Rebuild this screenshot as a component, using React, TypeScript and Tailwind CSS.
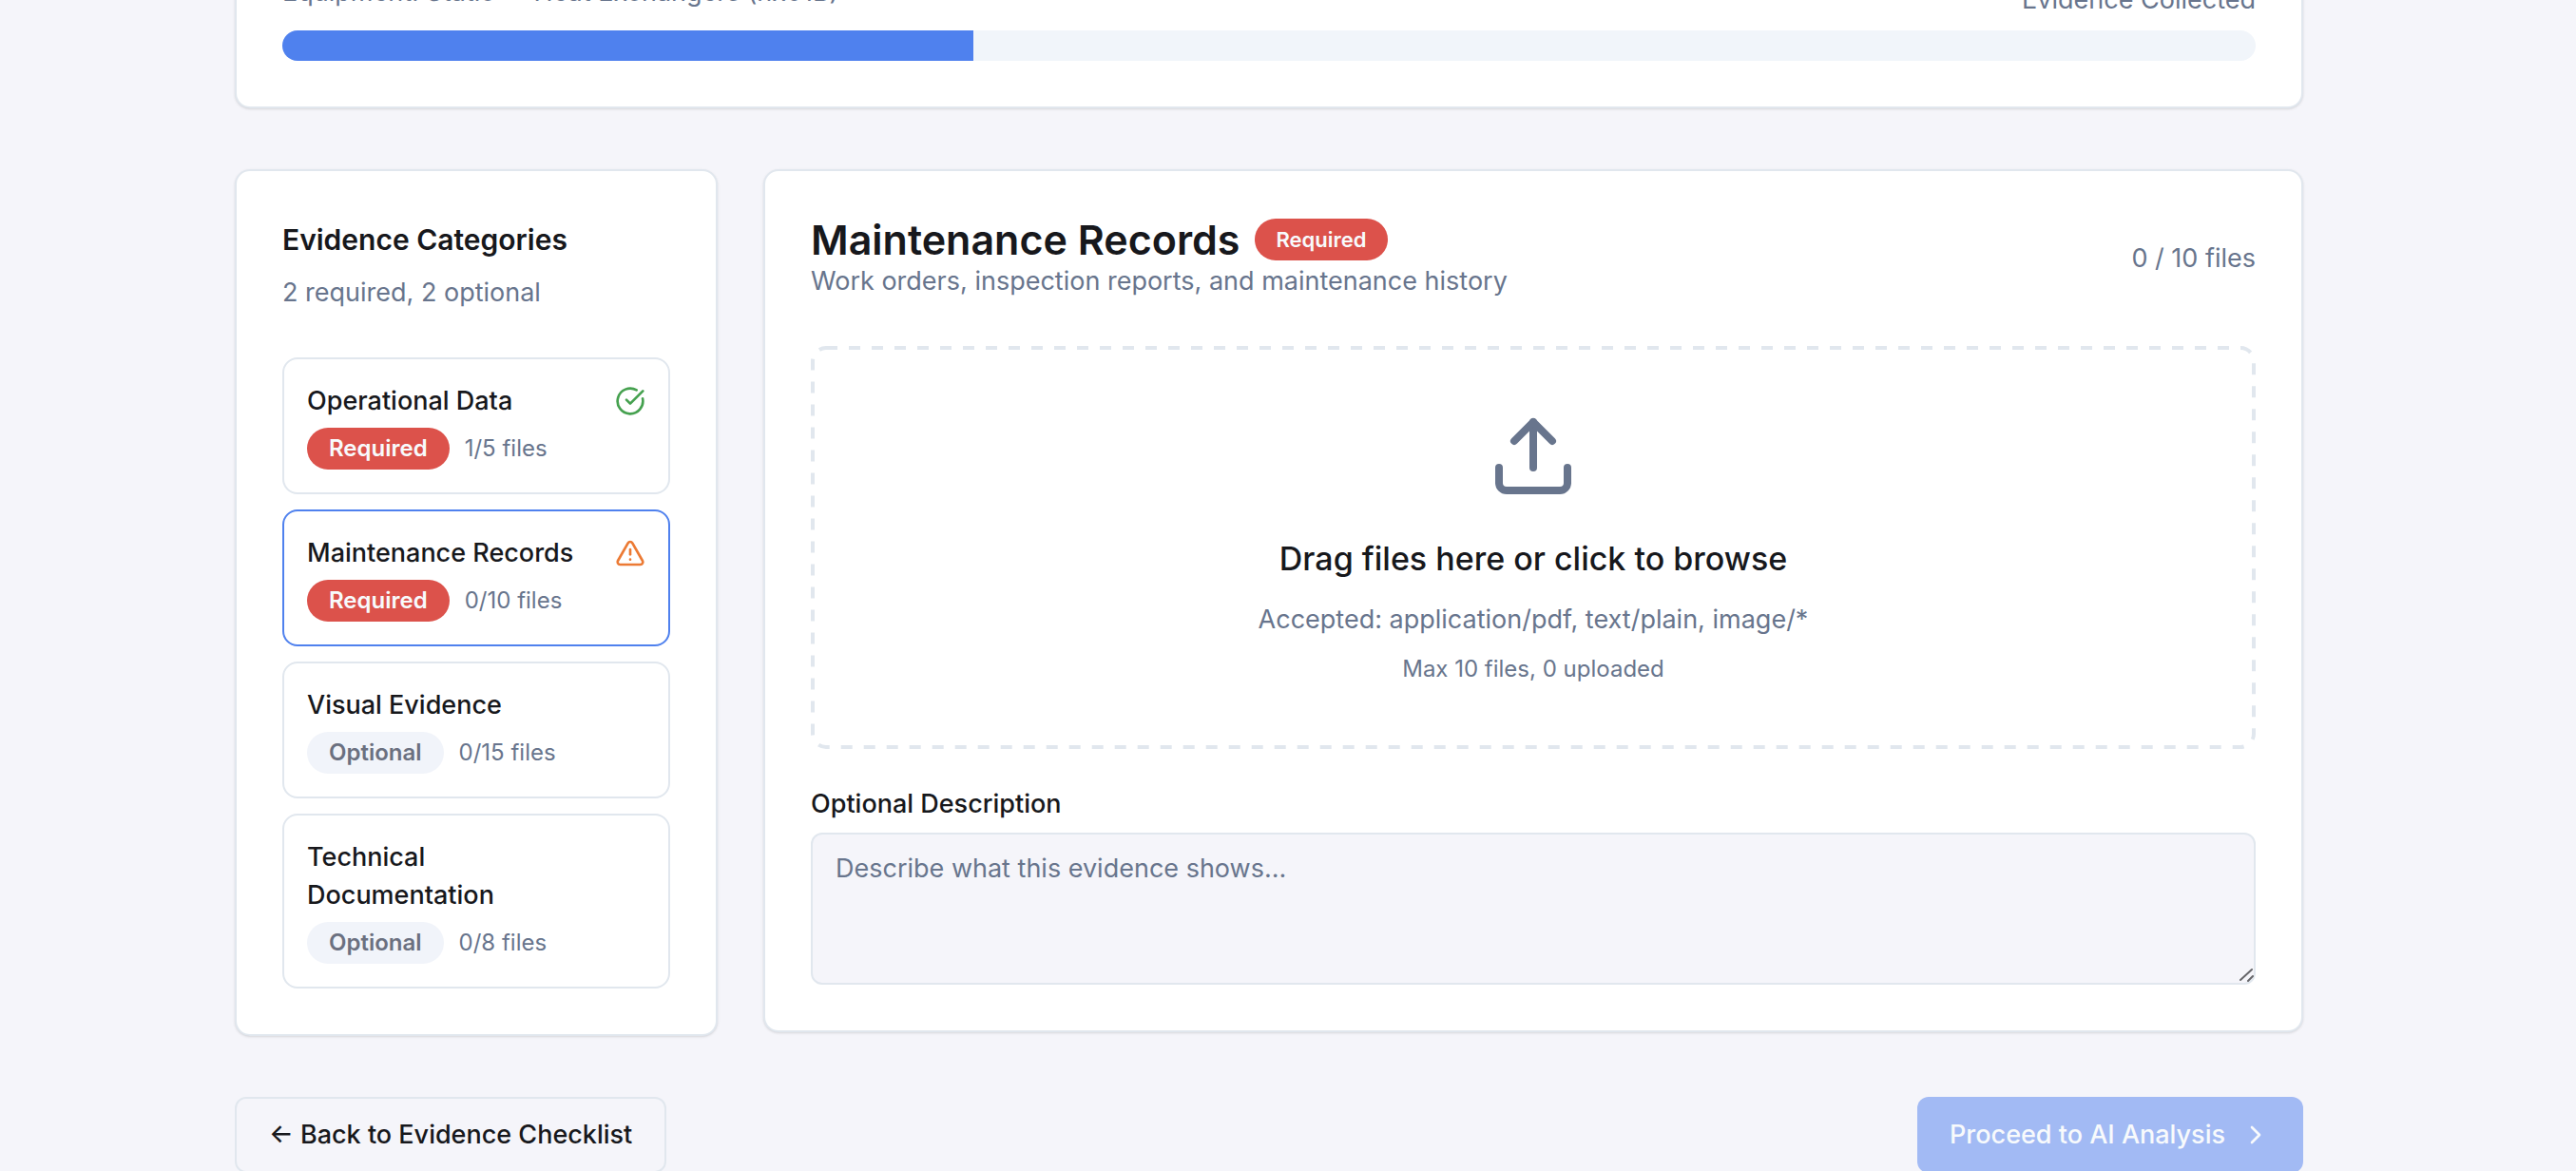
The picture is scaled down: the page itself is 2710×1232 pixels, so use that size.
import { useState } from "react";
import { ChevronRight, CircleCheckBig, TriangleAlert, Upload } from "lucide-react";

type Category = {
  name: string;
  required: boolean;
  count: number;
  max: number;
  status?: "done" | "missing";
};

const categories: Category[] = [
  { name: "Operational Data", required: true, count: 1, max: 5, status: "done" },
  { name: "Maintenance Records", required: true, count: 0, max: 10, status: "missing" },
  { name: "Visual Evidence", required: false, count: 0, max: 15 },
  { name: "Technical Documentation", required: false, count: 0, max: 8 },
];

function Badge({ required, compact = false }: { required: boolean; compact?: boolean }) {
  return (
    <span
      className={
        "flex h-11 items-center rounded-full font-semibold " +
        (compact ? "px-[22px] text-[22px] " : "px-[23px] text-2xl ") +
        (required ? "bg-[#dc524b] text-[#f8fafc]" : "bg-[#f1f4fa] text-[#6b7080]")
      }
    >
      {required ? "Required" : "Optional"}
    </span>
  );
}

function CategoryButton({
  category,
  selected,
  onSelect,
}: {
  category: Category;
  selected: boolean;
  onSelect: () => void;
}) {
  return (
    <button
      type="button"
      aria-pressed={selected}
      onClick={onSelect}
      className={
        "flex w-full items-start justify-between gap-2 rounded-2xl border-2 bg-white p-6 text-left " +
        (selected ? "border-[#4f81ee]" : "border-[#e1e7ee]")
      }
    >
      <span className="flex flex-1 flex-col gap-2">
        <span className="text-[27px] leading-10 font-medium">{category.name}</span>
        <span className="flex items-center gap-4">
          <Badge required={category.required} />
          <span className="text-2xl text-[#68758d]">
            {category.count}/{category.max} files
          </span>
        </span>
      </span>
      <span className="my-1 size-8 shrink-0">
        {category.status === "done" && <CircleCheckBig className="size-8 text-[#45a14f]" />}
        {category.status === "missing" && <TriangleAlert className="size-8 text-[#ec7a34]" />}
      </span>
    </button>
  );
}

export default function App() {
  const [selected, setSelected] = useState("Maintenance Records");
  const progress = 35;

  return (
    <div className="h-screen overflow-hidden bg-[#f5f5fa] pr-10 font-[Inter,sans-serif] text-[#17181c]">
      <main className="mx-auto flex w-full max-w-[2176px] flex-col gap-16">
        <section className="-mt-[70px] rounded-2xl border-2 border-[#e1e7ee] bg-white p-12 shadow-sm">
          <div className="mb-3 flex justify-between text-[27px] leading-10 text-[#68758d]">
            <p className="-mt-2">Equipment: Static → Heat Exchangers (hx01B)</p>
            <p>Evidence Collected</p>
          </div>
          <div
            role="progressbar"
            aria-label="Evidence Collected"
            aria-valuenow={progress}
            className="h-8 overflow-hidden rounded-full bg-[#f1f5fa]"
          >
            <div className="h-full bg-[#4f81ee]" style={{ width: `${progress}%` }} />
          </div>
        </section>

        <div className="grid grid-cols-4 items-start gap-12">
          <aside className="rounded-2xl border-2 border-[#e1e7ee] bg-white p-12 shadow-sm">
            <h3 className="text-3xl leading-12 font-semibold">Evidence Categories</h3>
            <p className="mt-3 text-[27px] leading-10 text-[#68758d]">2 required, 2 optional</p>
            <div className="mt-12 flex flex-col gap-4">
              {categories.map((category) => (
                <CategoryButton
                  key={category.name}
                  category={category}
                  selected={category.name === selected}
                  onSelect={() => setSelected(category.name)}
                />
              ))}
            </div>
          </aside>

          <section className="col-span-3 rounded-2xl border-2 border-[#e1e7ee] bg-white p-12 shadow-sm">
            <header className="flex items-center justify-between">
              <div>
                <div className="flex h-12 items-center gap-4">
                  <h2 className="text-[43px] leading-12 font-semibold">Maintenance Records</h2>
                  <Badge required compact />
                </div>
                <p className="text-[27px] leading-10 text-[#68758d]">
                  Work orders, inspection reports, and maintenance history
                </p>
              </div>
              <p className="text-[27px] leading-10 text-[#68758d]">0 / 10 files</p>
            </header>

            <button
              type="button"
              className="relative mt-12 flex w-full flex-col items-center px-16 py-[68px]"
            >
              <svg className="absolute inset-0 size-full overflow-visible" aria-hidden="true">
                <rect
                  x="2"
                  y="2"
                  rx="14"
                  className="h-[calc(100%-4px)] w-[calc(100%-4px)] fill-none stroke-[#e1e7ee] stroke-4"
                  strokeDasharray="12 12"
                />
              </svg>
              <Upload className="size-24 text-[#68758d]" />
              <span className="mt-8 text-[34px] leading-14 font-medium">
                Drag files here or click to browse
              </span>
              <span className="mt-4 text-[27px] leading-10 text-[#68758d]">
                Accepted: application/pdf, text/plain, image/*
              </span>
              <span className="mt-4 text-2xl leading-8 text-[#68758d]">
                Max 10 files, 0 uploaded
              </span>
            </button>

            <label htmlFor="description" className="mt-11 mb-4 block text-[27px] leading-7 font-medium">
              Optional Description
            </label>
            <div className="relative">
              <textarea
                id="description"
                placeholder="Describe what this evidence shows..."
                className="block h-40 w-full resize-none rounded-xl border-2 border-[#e1e7ee] bg-[#f5f5fa] px-6 py-4 text-[27px] leading-10 placeholder:text-[#68758d]"
              />
              <svg
                viewBox="0 0 16 16"
                className="pointer-events-none absolute right-0.5 bottom-0.5 size-4 stroke-[#66666a] stroke-2"
                strokeLinecap="round"
                aria-hidden="true"
              >
                <path d="M2 13 14 2M10 14l5-5" />
              </svg>
            </div>
          </section>
        </div>

        <nav className="flex justify-between">
          <button
            type="button"
            className="flex h-20 items-center rounded-xl border-2 border-[#e1e7ee] px-[34px] text-[27px] font-medium"
          >
            ← Back to Evidence Checklist
          </button>
          <button
            type="button"
            disabled
            className="flex h-20 items-center gap-4 rounded-xl bg-[#a2baf4] px-[34px] text-[27px] font-medium text-[#f8fafc]"
          >
            Proceed to AI Analysis
            <ChevronRight className="size-8" />
          </button>
        </nav>
      </main>
    </div>
  );
}
